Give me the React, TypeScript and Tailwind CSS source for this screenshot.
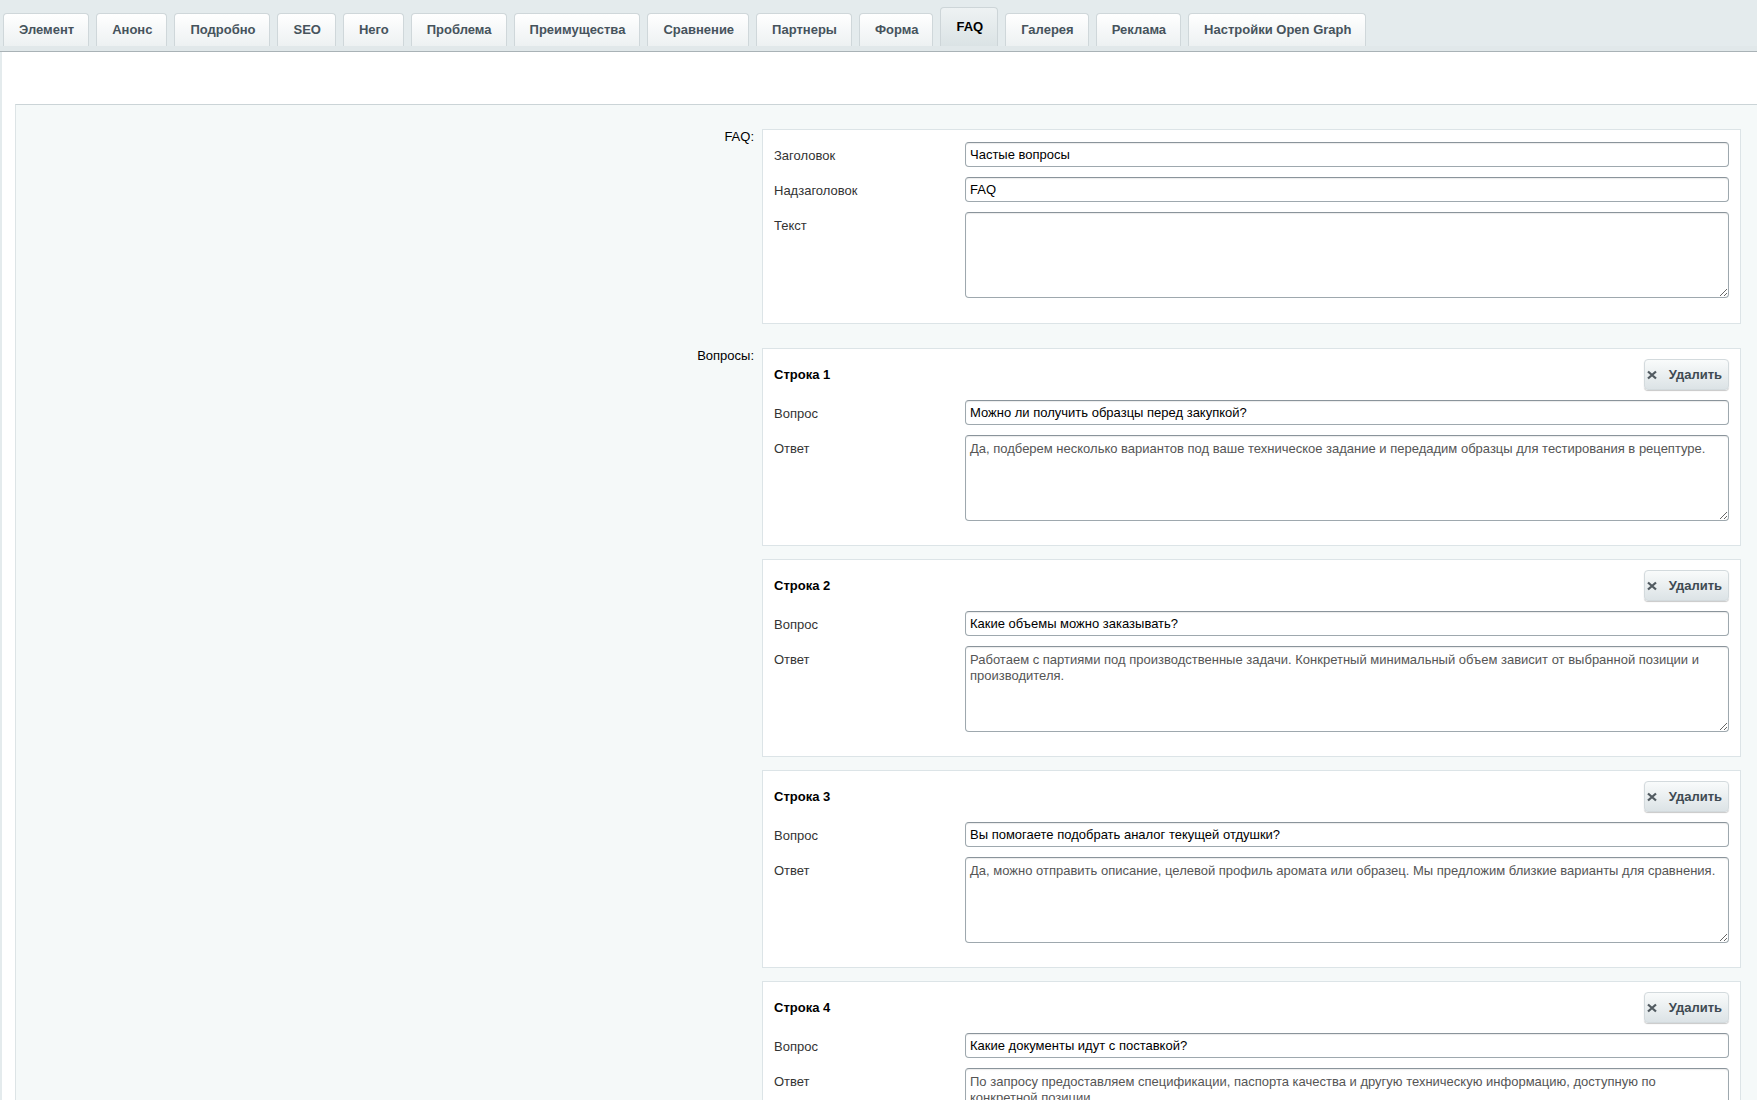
import React from "react";

const tabs = [
  "Элемент",
  "Анонс",
  "Подробно",
  "SEO",
  "Него",
  "Проблема",
  "Преимущества",
  "Сравнение",
  "Партнеры",
  "Форма",
  "FAQ",
  "Галерея",
  "Реклама",
  "Настройки Open Graph",
];

const questions = [
  {
    q: "Можно ли получить образцы перед закупкой?",
    a: "Да, подберем несколько вариантов под ваше техническое задание и передадим образцы для тестирования в рецептуре.",
  },
  {
    q: "Какие объемы можно заказывать?",
    a: "Работаем с партиями под производственные задачи. Конкретный минимальный объем зависит от выбранной позиции и производителя.",
  },
  {
    q: "Вы помогаете подобрать аналог текущей отдушки?",
    a: "Да, можно отправить описание, целевой профиль аромата или образец. Мы предложим близкие варианты для сравнения.",
  },
  {
    q: "Какие документы идут с поставкой?",
    a: "По запросу предоставляем спецификации, паспорта качества и другую техническую информацию, доступную по конкретной позиции.",
  },
];

const inputCls =
  "w-full h-[25px] px-[4px] border border-[#9ea8ae] border-t-[#8a949b] rounded-[4px] bg-white text-[13px] text-black shadow-[inset_0_1px_1px_rgba(0,0,0,0.08)] outline-none";
const areaCls =
  "block w-full h-[86px] px-[4px] pt-[5px] border border-[#9ea8ae] border-t-[#8a949b] rounded-[4px] bg-white text-[13px] leading-[16px] text-[#555] shadow-[inset_0_1px_1px_rgba(0,0,0,0.08)] outline-none";

function Field({ label, children }: { label: string; children: React.ReactNode }) {
  return (
    <>
      <div className="pt-[6px] leading-[15px] text-[#333]">{label}</div>
      <div>{children}</div>
    </>
  );
}

function DeleteButton() {
  return (
    <button className="h-[31px] w-[85px] flex items-center pl-[1px] pr-[6px] rounded-[4px] border border-[#d3dadd] bg-linear-to-b from-[#f9fbfb] to-[#dce3e6] shadow-[0_1px_1px_rgba(0,0,0,0.22)] text-[#3f4a52] font-bold">
      <svg width="12" height="10" viewBox="0 0 12 10" className="shrink-0">
        <path d="M2 1.5 L10 8.5 M10 1.5 L2 8.5" stroke="#525b61" strokeWidth="2.3" fill="none" />
      </svg>
      <span className="ml-auto">Удалить</span>
    </button>
  );
}

export default function App() {
  return (
    <div className="h-screen overflow-hidden bg-[#e4ebed] font-['Liberation_Sans',Arial,sans-serif] text-[13px] text-black flex flex-col">
      {/* Tabs */}
      <div className="h-[46px] flex items-end gap-[7px] pl-[3px] shrink-0">
        {tabs.map((t) =>
          t === "FAQ" ? (
            <div
              key={t}
              className="h-[39px] pl-[15px] pr-[14px] flex items-center rounded-t-[4px] border border-b-0 border-[#cdd5d8] bg-linear-to-b from-[#eef2f3] to-[#dbe3e5] font-bold text-black"
            >
              {t}
            </div>
          ) : (
            <div
              key={t}
              className="h-[33px] pl-[15px] pr-[14px] flex items-center rounded-t-[4px] border border-b-0 border-[#cfd7da] bg-linear-to-b from-white to-[#edf1f2] font-bold text-[#46535c]"
            >
              {t}
            </div>
          )
        )}
      </div>
      <div className="h-[6px] shrink-0 bg-[#e1e8ea] border-b border-[#a9b2b6]" />

      {/* Panel */}
      <div className="flex-1 ml-[2px] bg-white pt-[52px] pl-[13px]">
        <div className="h-full bg-[#f5f9f9] border-t border-l border-t-[#cbd4d7] border-l-[#dde4e6] pt-[24px] pr-[16px]">
          <div className="grid grid-cols-[738px_1fr] gap-x-[8px] gap-y-[24px] items-start">
            <div className="text-right leading-[15px]">FAQ:</div>
            <div className="bg-white border border-[#dce4e7] px-[11px] pt-[12px] pb-[25px]">
              <div className="grid grid-cols-[191px_1fr] gap-y-[10px]">
                <Field label="Заголовок">
                  <input className={inputCls} defaultValue="Частые вопросы" />
                </Field>
                <Field label="Надзаголовок">
                  <input className={inputCls} defaultValue="FAQ" />
                </Field>
                <Field label="Текст">
                  <textarea className={areaCls} defaultValue="" />
                </Field>
              </div>
            </div>

            <div className="text-right leading-[15px]">Вопросы:</div>
            <div className="flex flex-col gap-[13px]">
              {questions.map((item, i) => (
                <div key={i} className="bg-white border border-[#dce4e7] px-[11px] pt-[10px] pb-[24px]">
                  <div className="h-[31px] flex items-center justify-between">
                    <span className="font-bold">Строка {i + 1}</span>
                    <DeleteButton />
                  </div>
                  <div className="grid grid-cols-[191px_1fr] gap-y-[10px] mt-[10px]">
                    <Field label="Вопрос">
                      <input className={inputCls} defaultValue={item.q} />
                    </Field>
                    <Field label="Ответ">
                      <textarea className={areaCls} defaultValue={item.a} />
                    </Field>
                  </div>
                </div>
              ))}
            </div>
          </div>
        </div>
      </div>
    </div>
  );
}
